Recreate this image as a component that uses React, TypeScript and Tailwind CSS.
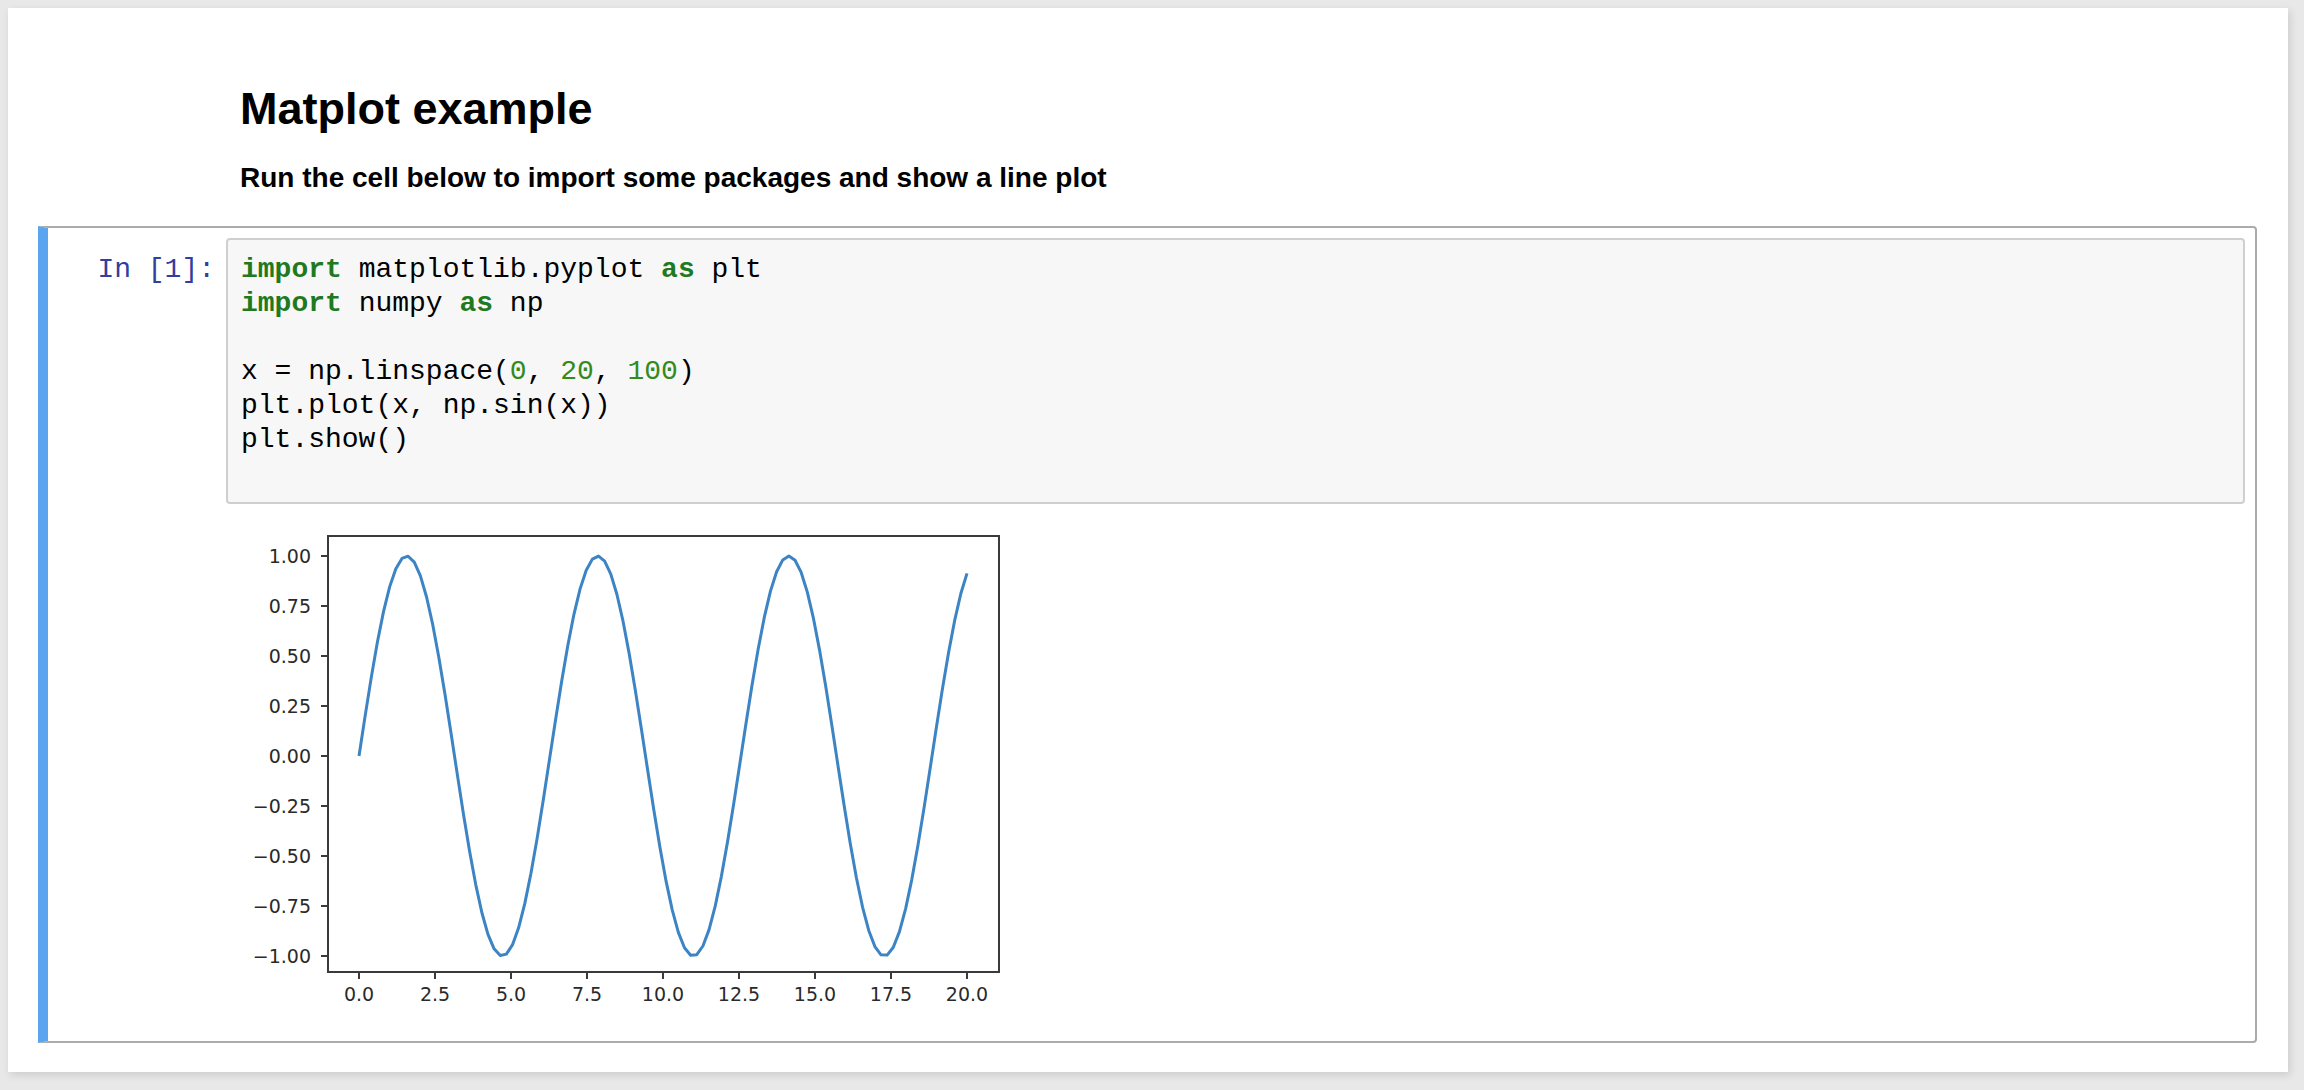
const mono = { fontFamily: '"Liberation Mono", "DejaVu Sans Mono", monospace' }

// ── Plot ────────────────────────────────────────────────────────────────────

// axes box inside the svg (svg origin sits at the input box's left edge)
const AX = { left: 102, top: 20, right: 773, bottom: 456 }
const x0 = 133
const xPerUnit = 30.4
const y1 = 40
const yPerUnit = 200

const sx = (v: number) => x0 + v * xPerUnit
const sy = (v: number) => y1 + (1 - v) * yPerUnit

function fmt(v: number, digits: number) {
  const s = Math.abs(v).toFixed(digits)
  return v < 0 ? `\u2212${s}` : s
}

function SinePlot() {
  const pts: string[] = []
  for (let i = 0; i < 100; i++) {
    const x = (20 * i) / 99
    pts.push(`${sx(x).toFixed(2)},${sy(Math.sin(x)).toFixed(2)}`)
  }
  const yTicks = [1, 0.75, 0.5, 0.25, 0, -0.25, -0.5, -0.75, -1]
  const xTicks = [0, 2.5, 5, 7.5, 10, 12.5, 15, 17.5, 20]

  return (
    <svg width={800} height={513} className="block" style={{ fontFamily: '"DejaVu Sans", sans-serif' }}>
      <polyline points={pts.join(' ')} fill="none" stroke="#3c84c4" strokeWidth={3} strokeLinejoin="round" />
      <rect
        x={AX.left}
        y={AX.top}
        width={AX.right - AX.left}
        height={AX.bottom - AX.top}
        fill="none"
        stroke="#3a3a3a"
        strokeWidth={2}
      />
      {yTicks.map((v) => (
        <g key={`y${v}`}>
          <line x1={AX.left - 7} x2={AX.left} y1={sy(v)} y2={sy(v)} stroke="#3a3a3a" strokeWidth={2} />
          <text x={AX.left - 17} y={sy(v)} dy="0.36em" textAnchor="end" fontSize={19} fill="#2a2a2a">
            {fmt(v, 2)}
          </text>
        </g>
      ))}
      {xTicks.map((v) => (
        <g key={`x${v}`}>
          <line x1={sx(v)} x2={sx(v)} y1={AX.bottom} y2={AX.bottom + 7} stroke="#3a3a3a" strokeWidth={2} />
          <text x={sx(v)} y={AX.bottom + 22} dy="0.36em" textAnchor="middle" fontSize={19} fill="#2a2a2a">
            {fmt(v, 1)}
          </text>
        </g>
      ))}
    </svg>
  )
}

// ── Code cell ───────────────────────────────────────────────────────────────

const kw = 'font-bold text-[#1f7a1f]'
const num = 'text-[#338a1f]'

function CodeInput() {
  return (
    <div
      className="flex-1 rounded-[4px] border-2 border-[#cfcfcf] bg-[#f7f7f7] pl-[13px] pr-[13px] pt-[13px] pb-[11px] text-[28px] leading-[34px] text-black whitespace-pre"
      style={mono}
    >
      <div>
        <span className={kw}>import</span> matplotlib.pyplot <span className={kw}>as</span> plt
      </div>
      <div>
        <span className={kw}>import</span> numpy <span className={kw}>as</span> np
      </div>
      <div>{' '}</div>
      <div>
        x = np.linspace(<span className={num}>0</span>, <span className={num}>20</span>,{' '}
        <span className={num}>100</span>)
      </div>
      <div>plt.plot(x, np.sin(x))</div>
      <div>plt.show()</div>
      <div>{' '}</div>
    </div>
  )
}

export default function App() {
  return (
    <div className="h-[1090px] w-full overflow-hidden bg-[#e8e8e8] pt-[8px] pl-[8px]">
      <div className="h-[1064px] w-[2280px] bg-white shadow-[2px_3px_8px_rgba(0,0,0,0.12)]">
        <div className="pl-[232px] pt-[76px]" style={{ fontFamily: '"Liberation Sans", Arial, sans-serif' }}>
          <h1 className="text-[45px] font-bold leading-[50px] text-black">Matplot example</h1>
          <h4 className="mt-[27px] text-[28px] font-bold leading-[34px] text-black">
            Run the cell below to import some packages and show a line plot
          </h4>
        </div>

        {/* selected cell */}
        <div className="ml-[30px] mr-[31px] mt-[31px] rounded-r-[4px] border-2 border-l-[10px] border-[#ababab] border-l-[#5ba5f0] pt-[10px] pb-[12px] pl-[10px] pr-[10px]">
          <div className="flex">
            <div
              className="w-[168px] shrink-0 pt-[15px] pr-[11px] text-right text-[28px] leading-[34px] text-[#303f9f]"
              style={mono}
            >
              In&nbsp;[1]:
            </div>
            <CodeInput />
          </div>
          <div className="mt-[12px] flex">
            <div className="w-[168px] shrink-0" />
            <SinePlot />
          </div>
        </div>
      </div>
    </div>
  )
}
